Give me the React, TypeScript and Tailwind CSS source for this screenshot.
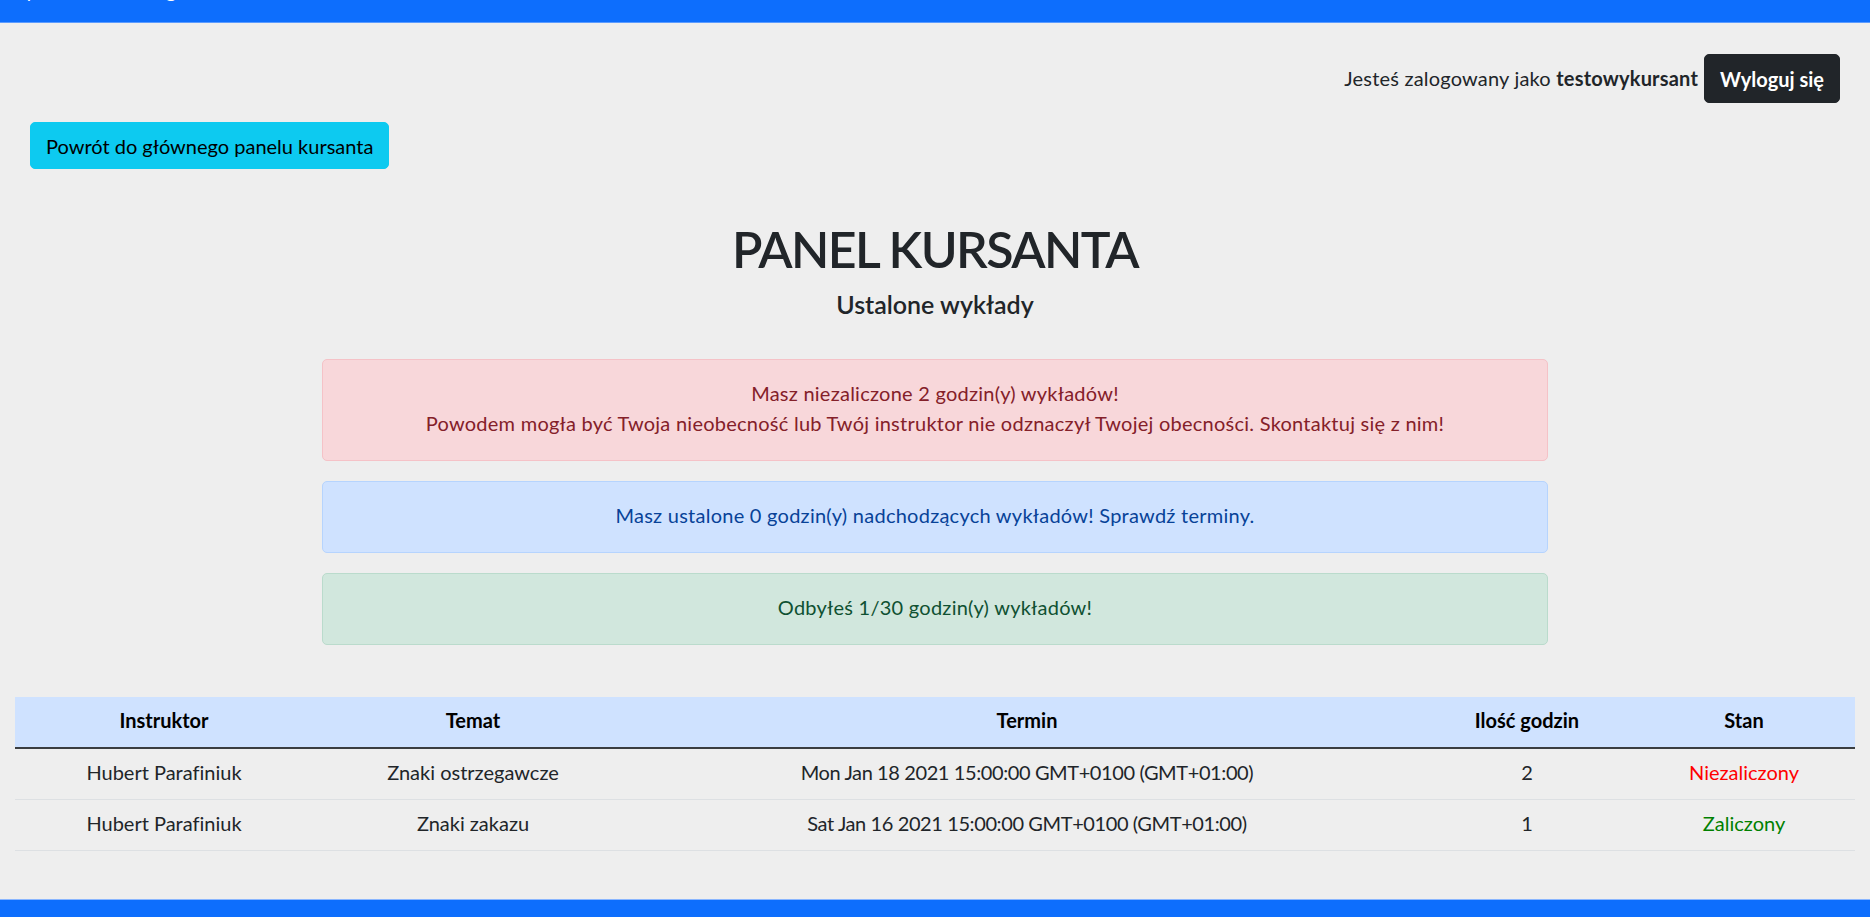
import React from "react";

const rows = [
  {
    instr: "Hubert Parafiniuk",
    temat: "Znaki ostrzegawcze",
    termin: "Mon Jan 18 2021 15:00:00 GMT+0100 (GMT+01:00)",
    godz: "2",
    ok: false,
  },
  {
    instr: "Hubert Parafiniuk",
    temat: "Znaki zakazu",
    termin: "Sat Jan 16 2021 15:00:00 GMT+0100 (GMT+01:00)",
    godz: "1",
    ok: true,
  },
];

export default function App() {
  return (
    <div className="min-h-[917px] bg-[#eeeeee] flex flex-col font-['Lato',sans-serif] [font-variant-ligatures:none] text-[20px] leading-[30px] text-[#212529]">
      <nav className="h-[23px] bg-[#0d6efd] border-b border-[#5c9cff] overflow-hidden">
        <div className="flex items-start -mt-[25px] pl-[15px] text-white">
          <span className="w-[130px]">Syllabus</span>
          <span>Logowanie</span>
        </div>
      </nav>

      <main className="flex-1 flex flex-col">
        <div className="flex justify-end items-center pr-[30px] pt-[31px]">
          <span className="tracking-[0.2px] -mt-[2px]">
            Jesteś zalogowany jako <b className="font-bold">testowykursant</b>
          </span>
          <button className="ml-[6px] h-[49px] px-[15px] rounded-[5px] border border-[#212529] bg-[#212529] text-white font-bold">
            Wyloguj się
          </button>
        </div>

        <div className="px-[30px] mt-[19px]">
          <button className="h-[47px] px-[15px] rounded-[5px] border border-[#0dcaf0] bg-[#0dcaf0] text-black">
            Powrót do głównego panelu kursanta
          </button>
        </div>

        <h1 className="mt-[50px] text-center text-[50px] leading-[60px] font-semibold tracking-[-1.6px]">
          PANEL KURSANTA
        </h1>
        <h5 className="mt-[10px] text-center text-[25px] leading-[30px] font-semibold">
          Ustalone wykłady
        </h5>

        <div className="w-[1226px] mx-auto mt-[40px] flex flex-col gap-[20px] tracking-[0.25px]">
          <div className="rounded-[5px] border border-[#f5c2c7] bg-[#f8d7da] text-[#842029] pt-[18px] pb-[22px] px-[20px] text-center">
            Masz niezaliczone 2 godzin(y) wykładów!
            <br />
            Powodem mogła być Twoja nieobecność lub Twój instruktor nie odznaczył Twojej obecności. Skontaktuj się z nim!
          </div>
          <div className="rounded-[5px] border border-[#b6d4fe] bg-[#cfe2ff] text-[#084298] pt-[18px] pb-[22px] px-[20px] text-center">
            Masz ustalone 0 godzin(y) nadchodzących wykładów! Sprawdź terminy.
          </div>
          <div className="rounded-[5px] border border-[#badbcc] bg-[#d1e7dd] text-[#0f5132] pt-[18px] pb-[22px] px-[20px] text-center">
            Odbyłeś 1/30 godzin(y) wykładów!
          </div>
        </div>

        <div className="px-[15px] mt-[52px]">
          <table className="w-full table-fixed border-collapse text-center">
            <colgroup>
              <col className="w-[298px]" />
              <col className="w-[320px]" />
              <col className="w-[788px]" />
              <col className="w-[212px]" />
              <col className="w-[222px]" />
            </colgroup>
            <thead>
              <tr className="bg-[#cfe2ff] border-b-2 border-[#3a3d40] text-black">
                <th className="h-[50px] pt-[8px] pb-[12px] px-[10px] font-bold">Instruktor</th>
                <th className="h-[50px] pt-[8px] pb-[12px] px-[10px] font-bold">Temat</th>
                <th className="h-[50px] pt-[8px] pb-[12px] px-[10px] font-bold">Termin</th>
                <th className="h-[50px] pt-[8px] pb-[12px] px-[10px] font-bold">Ilość godzin</th>
                <th className="h-[50px] pt-[8px] pb-[12px] px-[10px] font-bold">Stan</th>
              </tr>
            </thead>
            <tbody>
              {rows.map((r, i) => (
                <tr key={i} className="border-b border-[#dde0e3]">
                  <td className="h-[50px] pt-[8px] pb-[12px] px-[10px]">{r.instr}</td>
                  <td className="h-[50px] pt-[8px] pb-[12px] px-[10px]">{r.temat}</td>
                  <td className="h-[50px] pt-[8px] pb-[12px] px-[10px] tracking-[-0.4px]">{r.termin}</td>
                  <td className="h-[50px] pt-[8px] pb-[12px] px-[10px]">{r.godz}</td>
                  <td className={"h-[50px] pt-[8px] pb-[12px] px-[10px] " + (r.ok ? "text-[#008000]" : "text-[#ff0000]")}>
                    {r.ok ? "Zaliczony" : "Niezaliczony"}
                  </td>
                </tr>
              ))}
            </tbody>
          </table>
        </div>
      </main>

      <footer className="h-[18px] bg-[#0d6efd] border-t border-[#8ab6ff]" />
    </div>
  );
}
